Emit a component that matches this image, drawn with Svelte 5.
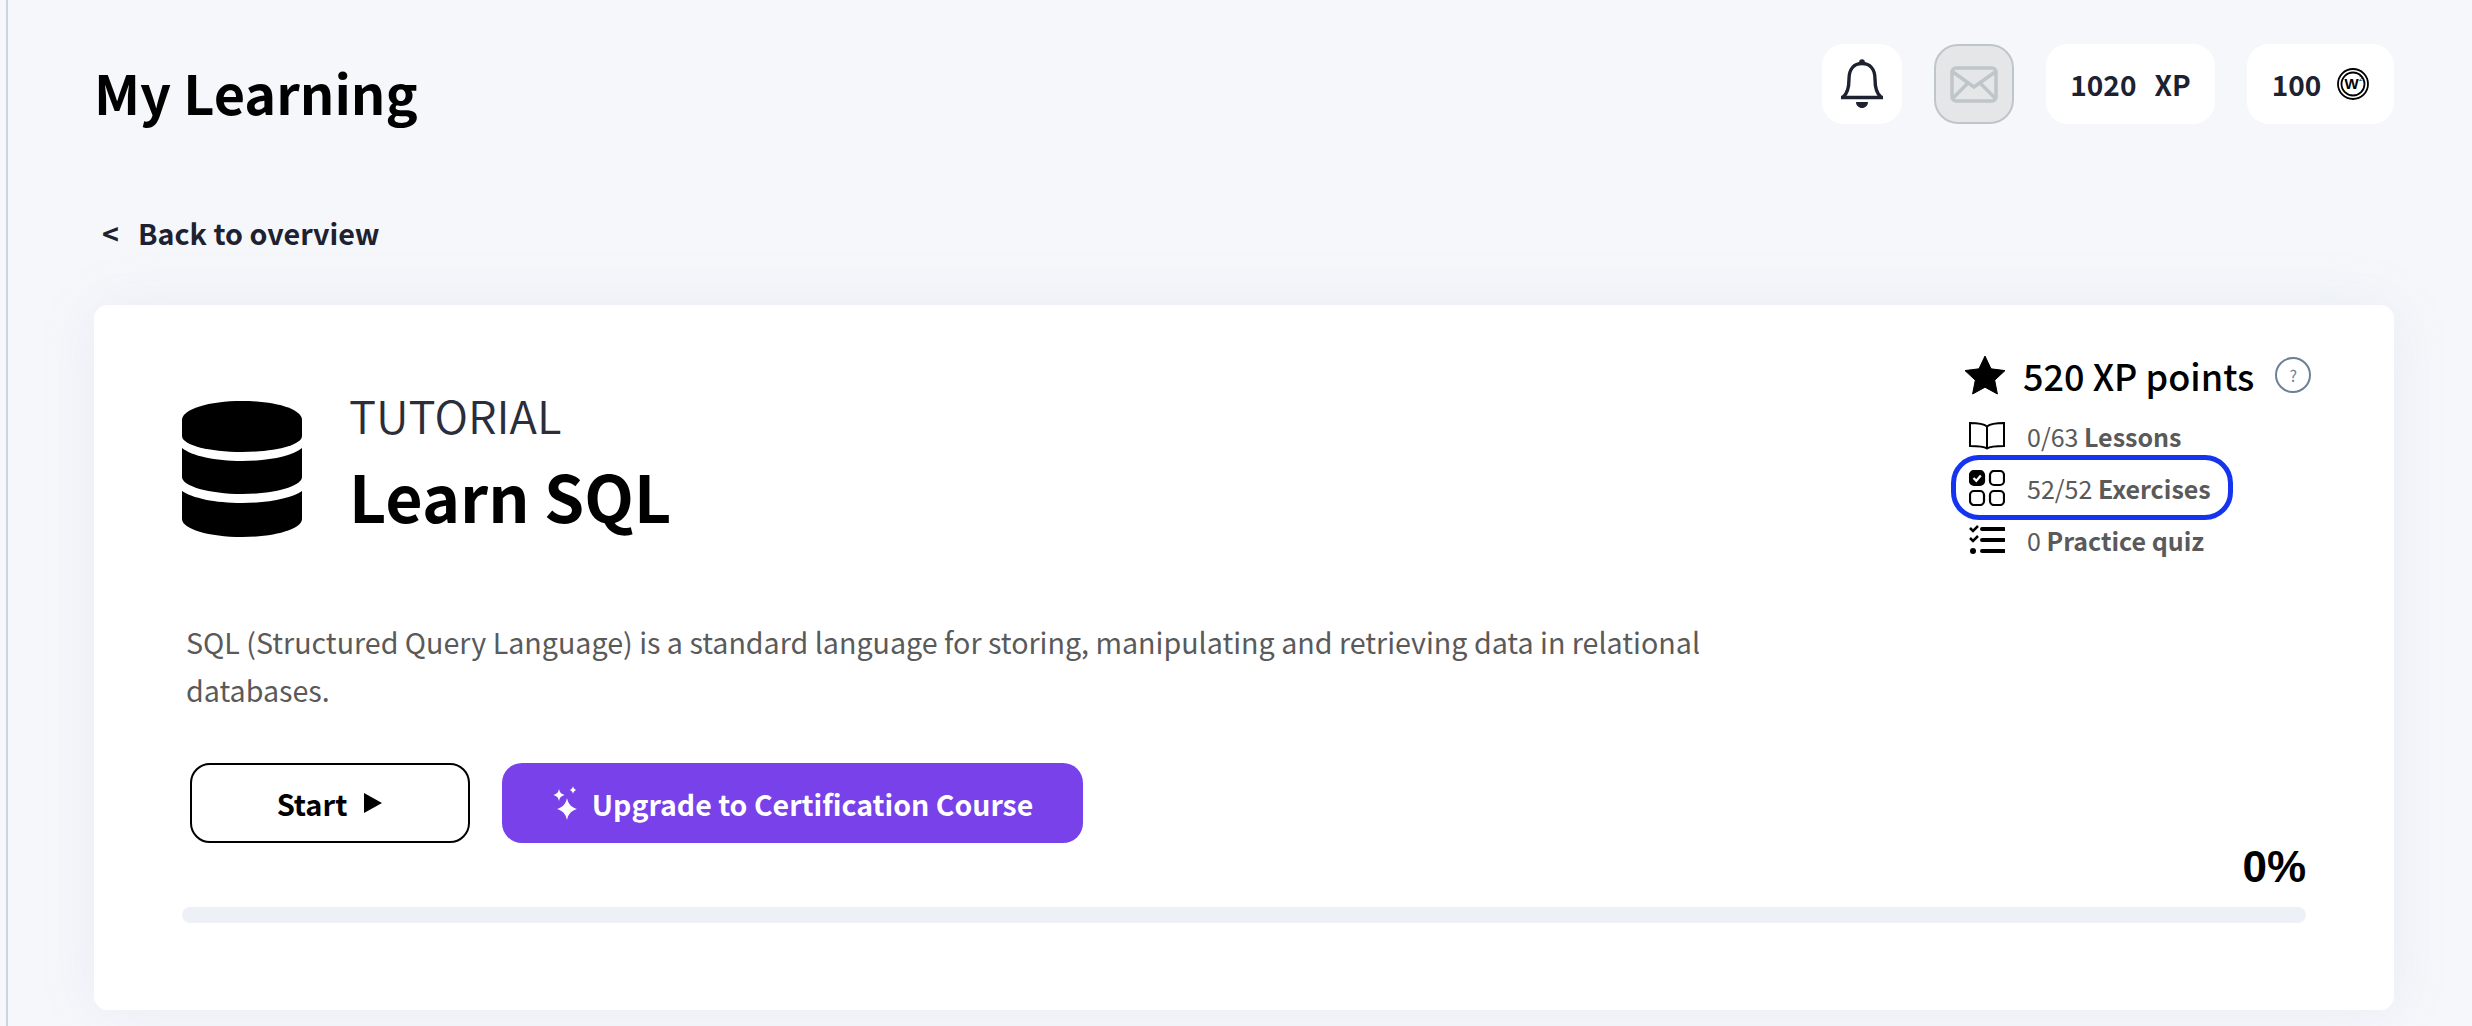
<script>
  const stats = [
    { id: 'book', count: '0/63', label: 'Lessons' },
    { id: 'grid', count: '52/52', label: 'Exercises', hl: true },
    { id: 'quiz', count: '0', label: 'Practice quiz' }
  ];
</script>

<div class="page">
  <header class="top">
    <h1>My Learning</h1>
    <div class="widgets">
      <div class="pill square">
        <svg width="44" height="50" viewBox="0 0 44 50" fill="none" stroke="#1d2130" stroke-width="3.400">
          <path d="M1 38.500h42M3 38C7 35 9 29 9 20 9 10 14 4.500 22 4.500S35 10 35 20c0 9 2 15 6 18" />
          <circle cx="22" cy="3" r="2.800" fill="#1d2130" stroke="none" />
          <path d="M16 43h12c0 3.500-2.800 6-6 6s-6-2.500-6-6z" fill="#1d2130" stroke="none" />
        </svg>
      </div>
      <div class="pill square mail">
        <svg width="48" height="37" viewBox="0 0 48 37" fill="none" stroke="#bfc6c9" stroke-width="3.500">
          <rect x="2" y="2" width="44" height="33" rx="4" />
          <path d="M3 6l21 15L45 6M3 32l15-15M45 32L30 17" />
        </svg>
      </div>
      <div class="pill xp"><span>1020</span><span>XP</span></div>
      <div class="pill coin">
        <span>100</span>
        <svg width="32" height="32" viewBox="0 0 32 32" fill="none" stroke="#000">
          <circle cx="16" cy="16" r="15" stroke-width="1.800" />
          <circle cx="16" cy="16" r="11.500" stroke-width="1.800" />
          <text x="14.500" y="21" text-anchor="middle" class="coinw">W</text>
          <text x="24" y="13" text-anchor="middle" class="coins">2</text>
        </svg>
      </div>
    </div>
  </header>

  <a class="back" href="#top"><span class="lt">&lt;</span>Back to overview</a>

  <section class="card">
    <div class="upper">
      <div class="intro">
        <div class="head">
          <svg class="db" width="120" height="136" viewBox="0 0 120 136">
            <path d="M0 19C0 8 27 0 60 0s60 8 60 19v16c0 9-27 16-60 16S0 44 0 35z" />
            <path d="M0 47c10 8 33 13 60 13s50-5 60-13v29c0 9-27 17-60 17S0 85 0 76z" />
            <path d="M0 90c10 7 33 12 60 12s50-5 60-12v28c0 10-27 18-60 18S0 128 0 118z" />
          </svg>
          <div class="titles">
            <div class="kind">TUTORIAL</div>
            <h2>Learn SQL</h2>
          </div>
        </div>
        <p>SQL (Structured Query Language) is a standard language for storing, manipulating and retrieving data in relational databases.</p>
        <div class="actions">
          <button class="start">Start
            <svg width="20" height="20" viewBox="0 0 20 20"><path d="M1 0l18 10L1 20z" /></svg>
          </button>
          <button class="upgrade">
            <svg width="26" height="34" viewBox="0 0 26 34" fill="#fff">
              <path d="M15 12c1.200 6 4 9 10 11-6 2-8.800 5-10 11-1.200-6-4-9-10-11 6-2 8.800-5 10-11z" />
              <path d="M7 3c.6 3.400 2.200 5 5.500 6-3.300 1-4.900 2.600-5.500 6-.6-3.400-2.200-5-5.500-6C4.800 8 6.400 6.400 7 3z" />
              <path d="M21 0c.4 2.200 1.400 3.300 3.500 4-2.100.7-3.100 1.800-3.500 4-.4-2.200-1.400-3.300-3.500-4 2.100-.7 3.100-1.800 3.500-4z" />
            </svg>
            Upgrade to Certification Course
          </button>
        </div>
      </div>
      <aside class="side">
        <div class="points">
          <svg class="star" width="42" height="40" viewBox="0 0 42 40">
            <path d="M21 1l6 12.800 14 1.800-10.300 9.600L33.400 39 21 32.200 8.600 39l2.700-13.800L1 15.600l14-1.800z" stroke="#000" stroke-linejoin="round" />
          </svg>
          <span class="ptext">520 XP points</span>
          <span class="help">?</span>
        </div>
        <ul>
          {#each stats as s}
            <li class:hl={s.hl}>
              {#if s.id === 'book'}
                <svg width="36" height="28" viewBox="0 0 36 28" fill="none" stroke="#000" stroke-width="2">
                  <path d="M18 4.500C15 2 8 1 1 1v23c7 0 14 .5 17 2.500 3-2 10-2.500 17-2.500V1c-7 0-14 1-17 3.500zM18 4.500v22" />
                </svg>
              {:else if s.id === 'grid'}
                <svg width="36" height="36" viewBox="0 0 36 36" fill="none" stroke="#000" stroke-width="2.200">
                  <rect x="1" y="1" width="14" height="14" rx="4" fill="#000" />
                  <path d="M4.500 8l2.800 2.800 4.500-5.300" stroke="#fff" stroke-width="2.200" />
                  <rect x="21" y="1" width="14" height="14" rx="4" />
                  <rect x="1" y="21" width="14" height="14" rx="4" />
                  <rect x="21" y="21" width="14" height="14" rx="4" />
                </svg>
              {:else}
                <svg width="36" height="30" viewBox="0 0 36 30" fill="none" stroke="#000" stroke-width="2.500">
                  <path d="M1 3l3 3 5-5M1 13l3 3 5-5" />
                  <circle cx="4" cy="26" r="3" fill="#000" stroke="none" />
                  <path d="M13 4h22M13 15h22M13 26h22" stroke-width="4" stroke-linecap="round" />
                </svg>
              {/if}
              <span class="stat">{s.count} <b>{s.label}</b></span>
            </li>
          {/each}
        </ul>
      </aside>
    </div>
    <div class="pct">0%</div>
    <div class="bar"></div>
  </section>
</div>

<style>
  :global(body) {
    margin: 0;
    background: #f5f7fb;
  }
  .page {
    box-sizing: border-box;
    height: 1026px;
    margin-left: 6px;
    border-left: 2px solid #c9d4e4;
    padding: 44px 78px 0 86px;
    overflow: hidden;
    font-family: "Noto Sans CJK SC", "Noto Sans", sans-serif;
    color: #1d2130;
  }
  .top {
    display: flex;
    justify-content: space-between;
    align-items: flex-start;
  }
  h1 {
    margin: 0;
    padding-top: 12px;
    font-size: 54px;
    line-height: 72px;
    font-weight: 700;
    color: #000;
  }
  .widgets {
    display: flex;
    gap: 32px;
  }
  .pill {
    box-sizing: border-box;
    height: 80px;
    background: #fff;
    border-radius: 22px;
    display: flex;
    align-items: center;
    justify-content: center;
    font-size: 28px;
    font-weight: 700;
  }
  .square { width: 80px; }
  .mail {
    background: #e5e6e7;
    border: 2px solid #bfc6c9;
    border-radius: 24px;
  }
  .xp { width: 169px; gap: 18px; }
  .coin { width: 147px; gap: 16px; }
  .coinw { font: 700 15px "Liberation Sans", sans-serif; fill: #000; stroke: none; }
  .coins { font: 400 7px "Liberation Sans", sans-serif; fill: #000; stroke: none; }
  .back {
    display: flex;
    align-items: center;
    margin-top: 84px;
    height: 40px;
    font-size: 28.700px;
    font-weight: 700;
    color: #1d2130;
    text-decoration: none;
    padding-left: 8px;
  }
  .lt { width: 30px; margin-right: 6px; }
  .card {
    box-sizing: border-box;
    height: 705px;
    margin-top: 53px;
    background: #fff;
    border-radius: 14px;
    box-shadow: 0 0 60px rgba(120, 135, 165, 0.1);
    padding: 50px 88px 0 88px;
    display: flex;
    flex-direction: column;
  }
  .upper {
    display: flex;
    justify-content: space-between;
    align-items: flex-start;
    height: 446px;
  }
  .intro { width: 1540px; padding-top: 46px; }
  .head { display: flex; align-items: center; gap: 47px; }
  .db { fill: #000; flex: none; }
  .titles { margin-top: -12px; }
  .kind {
    font-size: 45.500px;
    line-height: 56px;
    font-weight: 350;
    color: #2b2d3a;
    margin-top: -6px;
  }
  h2 {
    margin: 13px 0 0;
    font-size: 64.500px;
    line-height: 80px;
    font-weight: 700;
    color: #000;
  }
  p {
    margin: 81px 0 0 4px;
    width: 1530px;
    font-size: 28.650px;
    line-height: 48px;
    color: #5a5a5a;
  }
  .actions {
    display: flex;
    gap: 32px;
    margin: 49px 0 0 8px;
  }
  button {
    box-sizing: border-box;
    height: 80px;
    border-radius: 20px;
    font: inherit;
    font-size: 29px;
    font-weight: 700;
    display: flex;
    align-items: center;
    justify-content: center;
  }
  .start {
    width: 280px;
    background: #fff;
    border: 2px solid #000;
    color: #000;
    gap: 16px;
  }
  .upgrade {
    width: 581px;
    background: #7941ea;
    border: 0;
    color: #fff;
    gap: 14px;
    font-size: 28.500px;
  }
  .side { width: 337px; margin-left: auto; }
  .points {
    display: flex;
    align-items: center;
    height: 40px;
    font-size: 36px;
    font-weight: 500;
    color: #000;
    margin-left: -5px;
    white-space: nowrap;
  }
  .star { margin-right: 17px; flex: none; }
  .help {
    box-sizing: border-box;
    flex: none;
    width: 36px;
    height: 36px;
    margin-left: 21px;
    border: 2px solid #6f7f96;
    border-radius: 50%;
    font-size: 16px;
    font-weight: 400;
    color: #6f7f96;
    display: flex;
    align-items: center;
    justify-content: center;
  }
  ul {
    list-style: none;
    margin: 15px 0 0;
    padding: 0;
  }
  li {
    position: relative;
    display: flex;
    align-items: center;
    height: 52px;
    gap: 22px;
    white-space: nowrap;
  }
  li svg { flex: none; }
  li.hl::after {
    content: "";
    position: absolute;
    left: -18px;
    top: -7px;
    width: 282px;
    height: 65px;
    box-sizing: border-box;
    border: 5px solid #1434ef;
    border-radius: 28px;
  }
  .stat {
    font-size: 25px;
    color: #5a5a5a;
    font-weight: 400;
  }
  .stat b { font-weight: 700; }
  .pct {
    font: 700 44px/52px "Liberation Sans", sans-serif;
    color: #000;
    text-align: right;
    margin-top: 40px;
  }
  .bar {
    height: 16px;
    margin-top: 14px;
    background: #edf0f6;
    border-radius: 8px;
  }
</style>
